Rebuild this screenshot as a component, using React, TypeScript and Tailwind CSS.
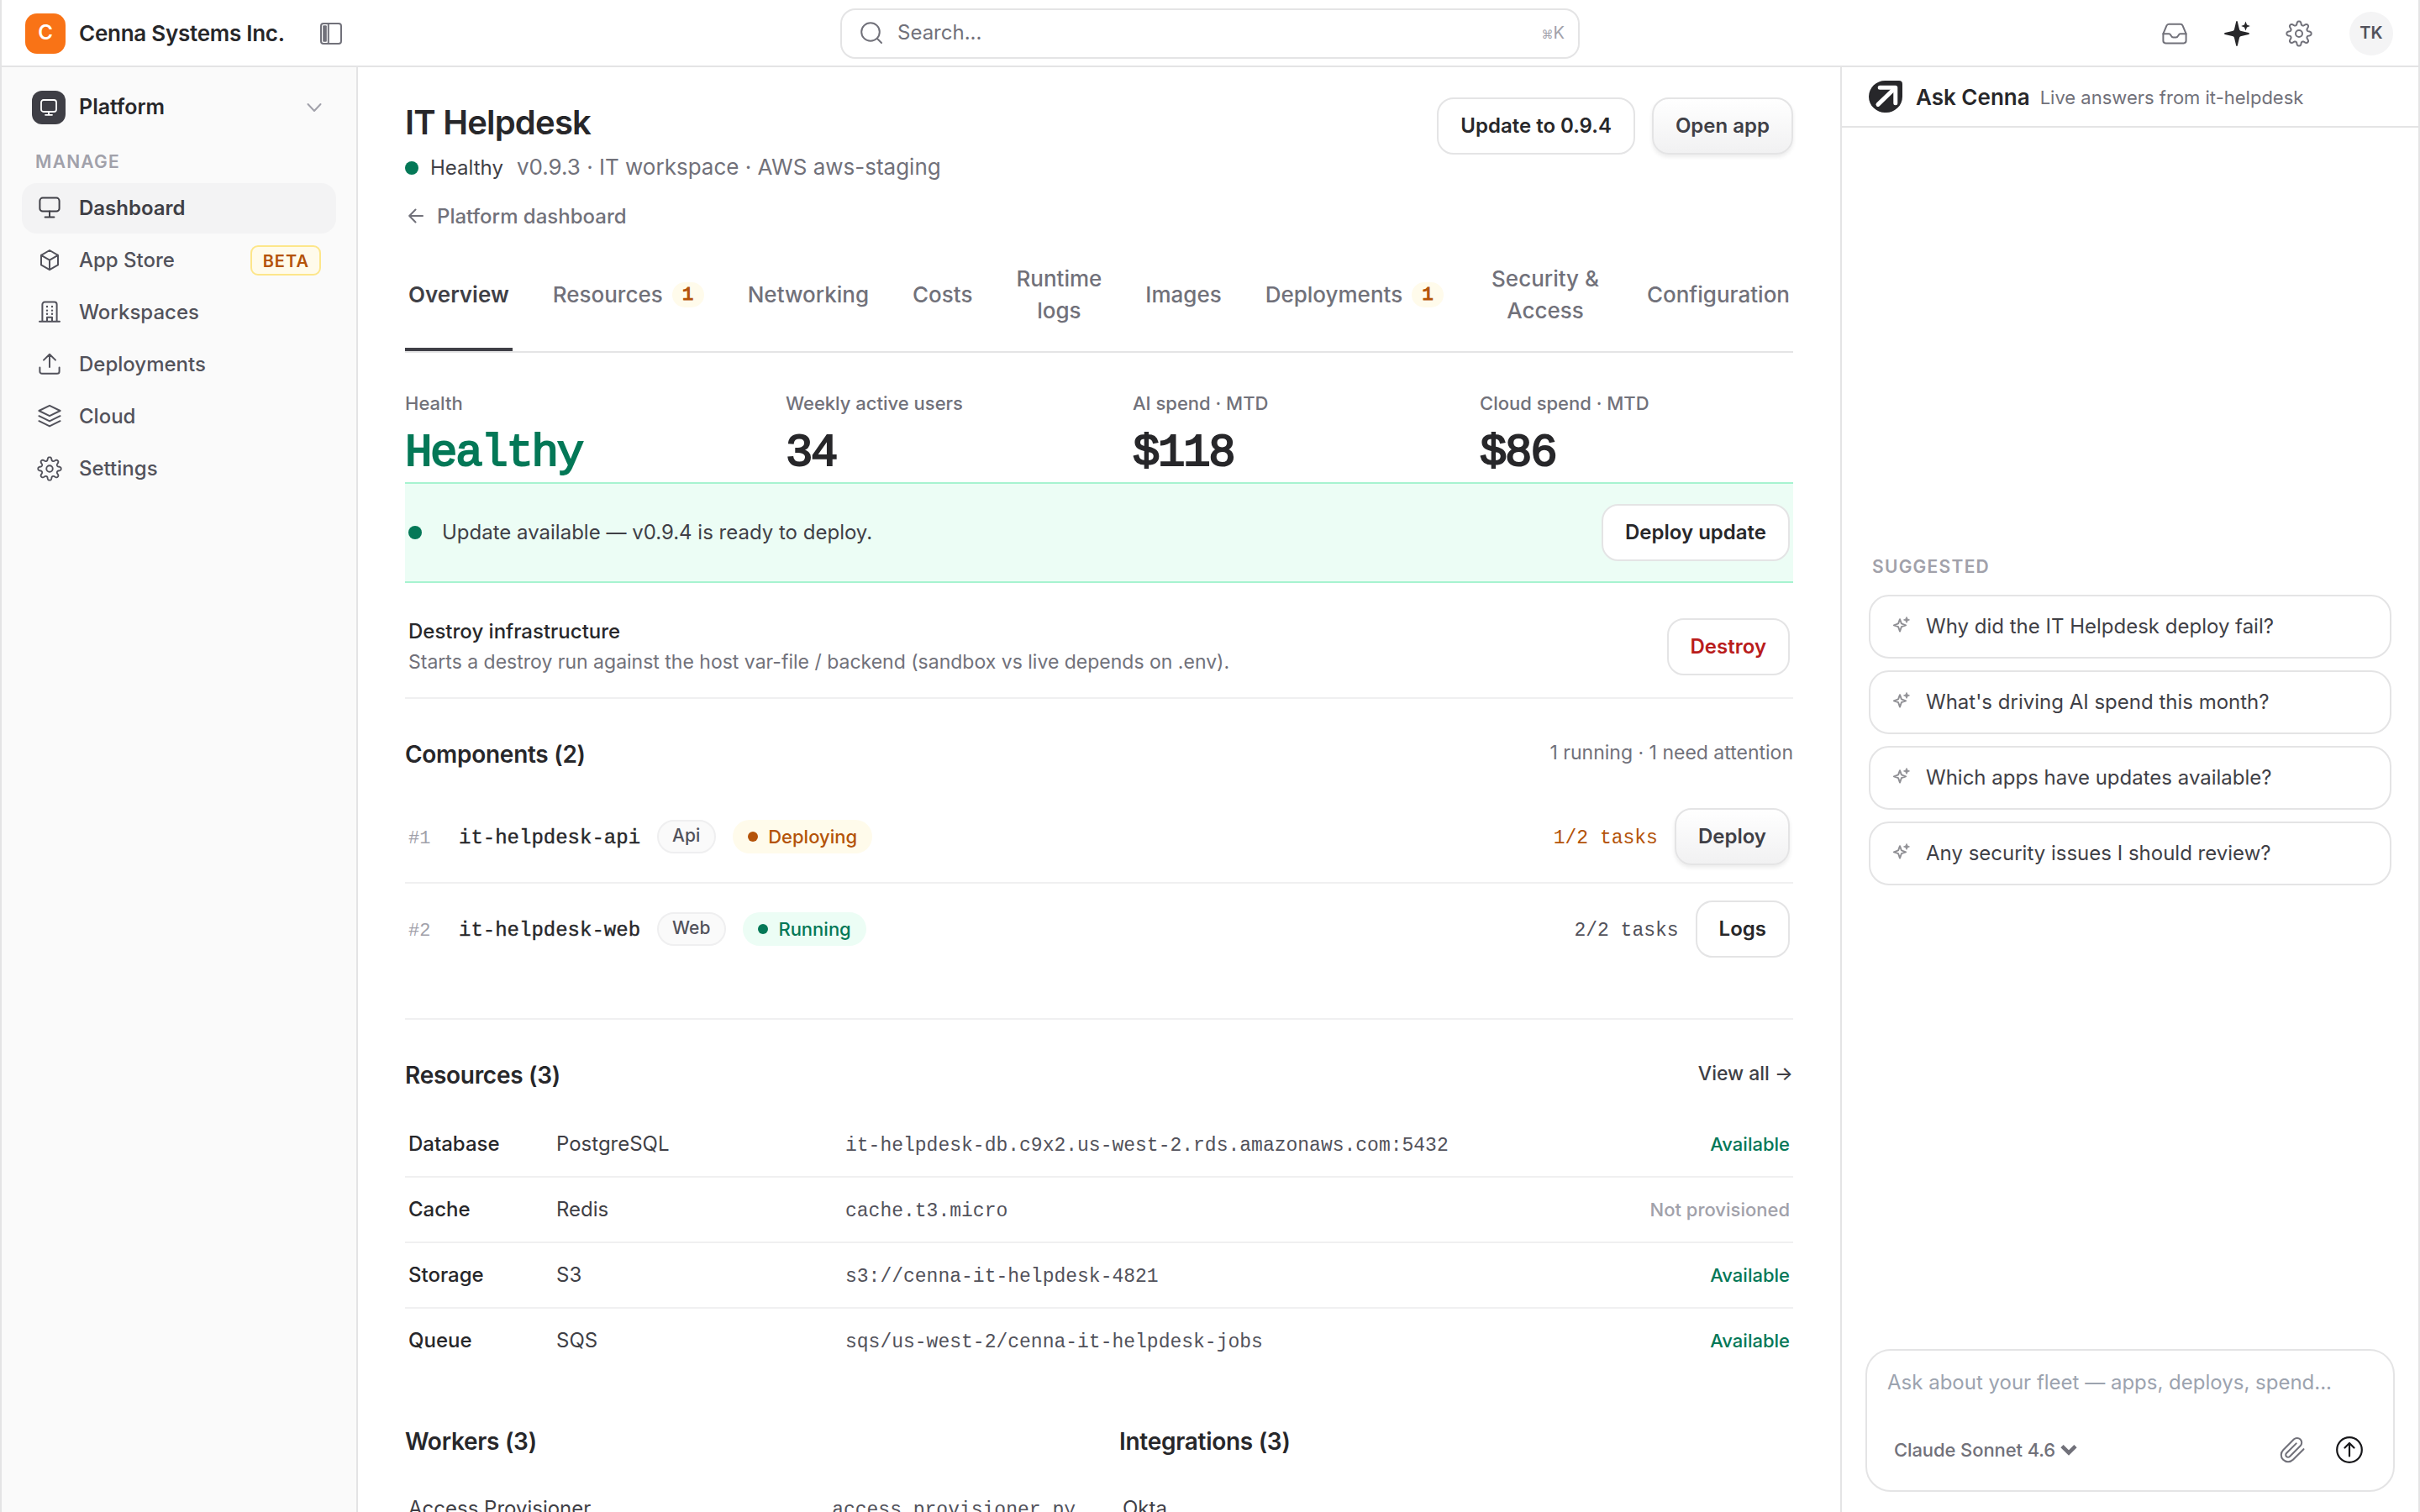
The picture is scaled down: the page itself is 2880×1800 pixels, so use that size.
import type { ReactNode } from "react";

/* ---------- icons ---------- */

function gearPath(c: number, mid: number, amp: number) {
  const pts: string[] = [];
  for (let i = 0; i < 192; i++) {
    const a = (i / 192) * Math.PI * 2;
    const r = mid + (amp * Math.tanh(1.5 * Math.cos(8 * a))) / Math.tanh(1.5);
    pts.push(`${(c + r * Math.sin(a)).toFixed(2)} ${(c - r * Math.cos(a)).toFixed(2)}`);
  }
  return `M${pts.join("L")}Z`;
}
const GEAR = gearPath(16, 12.5, 2.1);

function Gear({ className }: { className: string }) {
  return (
    <svg viewBox="0 0 32 32" fill="none" stroke="currentColor" strokeWidth="2" strokeLinejoin="round" className={className}>
      <path d={GEAR} />
      <circle cx="16" cy="16" r="4" />
    </svg>
  );
}

function NavSvg({ children }: { children: ReactNode }) {
  return (
    <svg
      viewBox="0 0 30 30"
      fill="none"
      stroke="currentColor"
      strokeWidth="2"
      strokeLinecap="round"
      strokeLinejoin="round"
      className="h-[30px] w-[30px] shrink-0"
    >
      {children}
    </svg>
  );
}

const MonitorIcon = () => (
  <NavSvg>
    <rect x="3.4" y="2.6" width="23.2" height="16" rx="3.4" />
    <path d="M15 18.6v7M9.6 25.6h10.8" />
  </NavSvg>
);
const CubeIcon = () => (
  <NavSvg>
    <path d="M15 3 25 8.8v11.6L15 26.2 5 20.4V8.8zM5 8.8l10 5.8 10-5.8M15 14.6v11.6" />
  </NavSvg>
);
const BuildingIcon = () => (
  <NavSvg>
    <path d="M3 25.8h24M6.4 25.8V5.4a2.8 2.8 0 0 1 2.8-2.8h11.6a2.8 2.8 0 0 1 2.8 2.8v20.4M12 25.8v-5h6v5" />
    <path d="M12 8h.01M18 8h.01M12 12.6h.01M18 12.6h.01M12 16.8h.01M18 16.8h.01" strokeWidth="2.4" />
  </NavSvg>
);
const UploadIcon = () => (
  <NavSvg>
    <path d="M15 18V3M8 9.6 15 2.8l7 6.8M3.4 18.6v4.6a2.6 2.6 0 0 0 2.6 2.6h18a2.6 2.6 0 0 0 2.6-2.6v-4.6" />
  </NavSvg>
);
const LayersIcon = () => (
  <NavSvg>
    <path d="M15 1.8 27.6 8 15 14.2 2.4 8zM2.4 14.2 15 20.4l12.6-6.2M2.4 20.2 15 26.4l12.6-6.2" />
  </NavSvg>
);

function SparkleOutline() {
  return (
    <svg viewBox="0 0 24 24" fill="none" className="mb-1 h-6 w-6 shrink-0 text-[#8f8f94]">
      <path
        d="M11 5.2l1.9 5.2 5.2 1.9-5.2 1.9-1.9 5.4-1.9-5.4-5.2-1.9 5.2-1.9z"
        stroke="currentColor"
        strokeWidth="1.9"
        strokeLinejoin="round"
      />
      <path
        d="M19 2.4l1.1 2.5 2.4 1-2.4 1L19 9.4l-1.1-2.5-2.4-1 2.4-1z"
        fill="currentColor"
        stroke="currentColor"
        strokeWidth=".8"
        strokeLinejoin="round"
      />
    </svg>
  );
}

function AskLogo() {
  return (
    <svg viewBox="0 0 40 38" className="h-[38px] w-10 shrink-0">
      <path d="M19.5 0H36a4 4 0 0 1 4 4v15a19.5 19 0 0 1-20 19A19.5 19 0 0 1 0 19 19.5 19 0 0 1 19.5 0z" fill="#27272a" />
      <path d="M13.2 8.2h18.600v18.600" fill="none" stroke="#fff" strokeWidth="5" strokeLinecap="round" strokeLinejoin="round" />
      <path d="M30 10 11 28.4" fill="none" stroke="#fff" strokeWidth="5" strokeLinecap="round" />
    </svg>
  );
}

/* ---------- shared pieces ---------- */

function Button({ children, tone = "plain" }: { children: ReactNode; tone?: "plain" | "raised" | "danger" }) {
  const tones = {
    plain: "bg-white text-[#27272a]",
    raised: "bg-linear-to-b from-white to-[#f1f1f2] text-[#3f3f46] shadow-[0_3px_5px_rgba(0,0,0,0.08)]",
    danger: "bg-white text-[#b91c1c]",
  };
  return (
    <button
      className={`flex h-[68px] shrink-0 items-center rounded-[20px] border-2 border-[#e4e4e5] px-[26px] text-[24px] font-semibold whitespace-nowrap ${tones[tone]}`}
    >
      {children}
    </button>
  );
}

const mono = "font-['Liberation_Mono',monospace]";

/* ---------- header ---------- */

function TopBar() {
  return (
    <header className="flex h-20 shrink-0 items-center border-b-2 border-[#e4e4e5] pt-[2px] pr-[30px] pl-7">
      <div className="flex w-[970px] shrink-0 items-center">
        <div className="flex h-12 w-12 items-center justify-center rounded-[14px] bg-[#f97316] pb-[2px] text-[24px] font-semibold text-white">C</div>
        <span className="ml-4 pb-[2px] text-[26px] font-semibold tracking-[-0.01em]">Cenna Systems Inc.</span>
        <svg viewBox="0 0 26 26" fill="none" stroke="currentColor" className="ml-[42px] h-[26px] w-[26px] text-[#71717a]">
          <rect x="1" y="1" width="24" height="24" rx="3" strokeWidth="2" />
          <path d="M9.800 1.500v23" strokeWidth="2" />
          <rect x="3.200" y="3.200" width="4.600" height="19.600" rx="1" fill="currentColor" stroke="none" />
        </svg>
      </div>
      <div className="flex h-[60px] w-[880px] shrink-0 items-center rounded-[18px] border-2 border-[#e4e4e5] pr-4 pl-[22px] text-[#71717a]">
        <svg viewBox="0 0 26 26" fill="none" stroke="currentColor" strokeWidth="2" strokeLinecap="round" className="mb-[2px] h-[26px] w-[26px]">
          <circle cx="12" cy="12" r="10.8" />
          <path d="m20 20 5 5" />
        </svg>
        <span className="ml-[18px] pb-[2px] text-[24px]">Search...</span>
        <span className="ml-auto pb-[3px] text-[20px] text-[#a1a1aa]">
          <span className="font-['DejaVu_Sans',sans-serif] text-[14px]">⌘</span>K
        </span>
      </div>
      <div className="flex flex-1 items-center justify-end text-[#71717a]">
        <svg viewBox="0 0 30 30" fill="none" stroke="currentColor" strokeWidth="2" strokeLinejoin="round" strokeLinecap="round" className="h-[30px] w-[30px]">
          <path d="M1.4 15.2 5.4 5.6a3 3 0 0 1 2.7-1.8h13.8a3 3 0 0 1 2.7 1.8l4 9.6v8.4a2.8 2.8 0 0 1-2.8 2.8H4.2a2.8 2.8 0 0 1-2.8-2.8z" />
          <path d="M1.4 15.2h6.8c1.4 0 1.8.9 2.3 1.9.6 1.3 1.4 2.3 2.9 2.3h3.2c1.5 0 2.3-1 2.9-2.3.5-1 .9-1.9 2.3-1.9h6.8" />
        </svg>
        <svg viewBox="0 0 32 32" className="ml-[43px] h-8 w-8 text-[#27272a]" fill="currentColor">
          <path d="M16 1c.5 0 .8.4.9.9l2 8.6c.3 1.4 1.1 2.2 2.5 2.5l8.700 2c1.200.3 1.200 1.700 0 2l-8.700 2c-1.400.3-2.200 1.100-2.500 2.500l-2 8.600c-.2 1.200-1.600 1.200-1.800 0l-2-8.600c-.3-1.400-1.100-2.200-2.500-2.500l-8.700-2c-1.200-.3-1.200-1.700 0-2l8.700-2c1.400-.3 2.200-1.100 2.500-2.500l2-8.600c.1-.5.4-.9.9-.9z" />
          <path d="M26.5 1.6l1.500 4 3.800 1.500-3.800 1.500-1.500 4-1.500-4-3.800-1.500 3.800-1.500z" />
        </svg>
        <Gear className="ml-[42px] h-8 w-8" />
        <div className="ml-[44px] flex h-[52px] w-[52px] items-center justify-center rounded-full bg-[#f4f4f5] pb-[2px] text-[20px] font-semibold text-[#52525b]">
          TK
        </div>
      </div>
    </header>
  );
}

/* ---------- sidebar ---------- */

const NAV: { label: string; icon: ReactNode; badge?: string; active?: boolean }[] = [
  { label: "Dashboard", icon: <MonitorIcon />, active: true },
  { label: "App Store", icon: <CubeIcon />, badge: "BETA" },
  { label: "Workspaces", icon: <BuildingIcon /> },
  { label: "Deployments", icon: <UploadIcon /> },
  { label: "Cloud", icon: <LayersIcon /> },
  { label: "Settings", icon: <Gear className="h-[30px] w-[30px] shrink-0" /> },
];

function Sidebar() {
  return (
    <aside className="flex w-[424px] shrink-0 flex-col border-r-2 border-[#e4e4e5] bg-[#fafafa] px-6">
      <div className="mt-7 flex h-10 items-center pr-[17px] pl-3">
        <div className="flex h-10 w-10 items-center justify-center rounded-[12px] bg-[#3f3f46] text-white">
          <svg viewBox="0 0 20 20" fill="none" stroke="currentColor" strokeWidth="1.8" strokeLinecap="round" className="h-5 w-5">
            <rect x="1" y="1" width="18" height="14" rx="2.8" />
            <path d="M10 15v3.6M6 18.800h8" />
          </svg>
        </div>
        <span className="ml-4 text-[25px] font-semibold">Platform</span>
        <svg viewBox="0 0 18 12" fill="none" stroke="currentColor" strokeWidth="2" strokeLinecap="round" strokeLinejoin="round" className="ml-auto h-3 w-[18px] text-[#a1a1aa]">
          <path d="m1.5 2 7.5 8 7.5-8" />
        </svg>
      </div>
      <div className="mt-[30px] h-[30px] pl-4 text-[21px] leading-[30px] font-semibold tracking-[0.06em] text-[#a1a1aa]">MANAGE</div>
      <nav className="mt-[10px] flex flex-col gap-0.5">
        {NAV.map((n) => (
          <a
            key={n.label}
            className={`flex h-[60px] items-center rounded-[18px] px-[18px] text-[24px] ${
              n.active ? "bg-[#f3f3f4] font-semibold text-[#3f3f46]" : "font-medium text-[#52525b]"
            }`}
          >
            {n.icon}
            <span className="ml-5">{n.label}</span>
            {n.badge && (
              <span className="ml-auto flex h-9 items-center rounded-[9px] border-2 border-[#fde68a] bg-[#fffbeb] pt-px pr-3 pl-[13px] text-[20px] font-semibold tracking-[0.05em] text-[#b45309]">
                {n.badge}
              </span>
            )}
          </a>
        ))}
      </nav>
    </aside>
  );
}

/* ---------- main ---------- */

const TABS: { lines: string[]; count?: number; active?: boolean; wide?: boolean }[] = [
  { lines: ["Overview"], active: true },
  { lines: ["Resources"], count: 1 },
  { lines: ["Networking"] },
  { lines: ["Costs"] },
  { lines: ["Runtime", "logs"] },
  { lines: ["Images"] },
  { lines: ["Deployments"], count: 1 },
  { lines: ["Security &", "Access"], wide: true },
  { lines: ["Configuration"] },
];

const STATS = [
  { label: "Health", value: "Healthy", color: "text-[#047857]" },
  { label: "Weekly active users", value: "34", color: "text-[#27272a]" },
  { label: "AI spend · MTD", value: "$118", color: "text-[#27272a]" },
  { label: "Cloud spend · MTD", value: "$86", color: "text-[#27272a]" },
];

const RESOURCES = [
  ["Database", "PostgreSQL", "it-helpdesk-db.c9x2.us-west-2.rds.amazonaws.com:5432", true],
  ["Cache", "Redis", "cache.t3.micro", false],
  ["Storage", "S3", "s3://cenna-it-helpdesk-4821", true],
  ["Queue", "SQS", "sqs/us-west-2/cenna-it-helpdesk-jobs", true],
] as const;

function SectionTitle({ children }: { children: ReactNode }) {
  return <h2 className="text-[28px] leading-10 font-semibold tracking-[-0.01em]">{children}</h2>;
}

function ComponentRow(p: { n: string; name: string; kind: string; status: ReactNode; tasks: string; warn?: boolean; action: ReactNode; divider?: boolean }) {
  return (
    <div className={`flex items-center px-1 py-5 ${p.divider ? "border-b-2 border-[#f0f0f1]" : ""}`}>
      <span className={`w-[60px] pt-[5px] text-[22px] text-[#a1a1aa] ${mono}`}>{p.n}</span>
      <span className={`pt-[4px] text-[24px] text-[#27272a] [-webkit-text-stroke:0.4px_currentColor] ${mono}`}>{p.name}</span>
      <span className="ml-5 flex h-10 items-center rounded-full border-2 border-[#efeff0] bg-[#fafafa] pr-[17px] pb-[2px] pl-4 text-[21px] font-medium text-[#52525b]">
        {p.kind}
      </span>
      {p.status}
      <span className={`mr-5 ml-auto pt-[5px] text-[23px] ${p.warn ? "text-[#b45309]" : "text-[#52525b]"} ${mono}`}>{p.tasks}</span>
      {p.action}
    </div>
  );
}

function Main() {
  return (
    <main className="flex min-w-0 flex-1 flex-col overflow-hidden px-14">
      <div className="mt-9 flex shrink-0 items-start justify-between">
        <div className="pt-1">
          <h1 className="h-[52px] text-[40px] leading-[52px] font-semibold tracking-[-0.02em]">IT Helpdesk</h1>
          <div className="mt-[13px] flex h-[30px] items-center">
            <span className="h-4 w-4 rounded-full bg-[#047857]" />
            <span className="ml-[14px] text-[24px] text-[#3f3f46]">Healthy</span>
            <span className="ml-4 pb-[3px] text-[26px] text-[#71717a]">v0.9.3 · IT workspace · AWS aws-staging</span>
          </div>
          <a className="mt-7 flex h-[30px] items-center pl-1 text-[24px] font-medium text-[#71717a]">
            <svg viewBox="0 0 18 18" fill="none" stroke="currentColor" strokeWidth="2" strokeLinecap="round" strokeLinejoin="round" className="mb-[2px] h-[18px] w-[18px]">
              <path d="M17 9H1.5M8.5 1.5 1.2 9l7.300 7.500" />
            </svg>
            <span className="ml-4">Platform dashboard</span>
          </a>
        </div>
        <div className="flex gap-5">
          <Button>Update to 0.9.4</Button>
          <Button tone="raised">Open app</Button>
        </div>
      </div>

      <div className="mt-[10px] flex h-[137px] shrink-0 gap-11 border-b-2 border-[#e4e4e5] text-[26px] leading-[38px]">
        {TABS.map((t) => (
          <div
            key={t.lines[0]}
            className={`relative flex items-center justify-center px-1 text-center ${t.wide ? "grow" : ""} ${
              t.active ? "font-semibold text-[#3f3f46]" : "font-medium text-[#71717a]"
            }`}
          >
            <span>
              {t.lines.map((l) => (
                <span key={l} className="block">
                  {l}
                </span>
              ))}
            </span>
            {t.count && (
              <span
                className={`ml-[11px] flex h-[30px] w-[38px] items-center justify-center rounded-full bg-[#fffbeb] pt-[2px] text-[22px] font-normal text-[#b45309] [-webkit-text-stroke:1.2px_currentColor] ${mono}`}
              >
                {t.count}
              </span>
            )}
            {t.active && <span className="absolute inset-x-0 bottom-0 h-1 bg-[#3f3f46]" />}
          </div>
        ))}
      </div>

      <div className="mt-[45px] grid shrink-0 grid-cols-[453px_413px_413px_1fr]">
        {STATS.map((s) => (
          <div key={s.label} className="h-[109px]">
            <div className="text-[22px] leading-[30px] font-medium text-[#71717a]">{s.label}</div>
            <div className={`mt-[17px] text-[54px] leading-[56px] tracking-[-2.3px] [-webkit-text-stroke:2px_currentColor] ${s.color} ${mono}`}>{s.value}</div>
          </div>
        ))}
      </div>

      <div className="flex h-[120px] shrink-0 items-center border-y-2 border-[#a7f3d0] bg-[#ecfdf5] px-1">
        <span className="h-4 w-4 rounded-full bg-[#047857]" />
        <span className="ml-6 text-[24px] text-[#3f3f46]">Update available — v0.9.4 is ready to deploy.</span>
        <div className="ml-auto">
          <Button>Deploy update</Button>
        </div>
      </div>

      <div className="flex shrink-0 items-center justify-between border-b-2 border-[#f0f0f1] px-1 pt-10 pb-6 leading-9">
        <div>
          <div className="text-[24px] font-medium">Destroy infrastructure</div>
          <div className="text-[23px] text-[#71717a]">Starts a destroy run against the host var-file / backend (sandbox vs live depends on .env).</div>
        </div>
        <Button tone="danger">Destroy</Button>
      </div>

      <section className="shrink-0 border-b-2 border-[#f0f0f1] pb-[52px]">
        <div className="mt-[46px] mb-6 flex h-10 items-center justify-between">
          <SectionTitle>Components (2)</SectionTitle>
          <span className="pb-[3px] text-[23px] text-[#71717a]">1 running · 1 need attention</span>
        </div>
        <ComponentRow
          n="#1"
          name="it-helpdesk-api"
          kind="Api"
          divider
          warn
          tasks="1/2 tasks"
          status={
            <span className="ml-5 flex h-10 items-center gap-3 rounded-full bg-[#fffbeb] px-[18px] text-[22px] font-medium text-[#b45309]">
              <span className="h-3 w-3 rounded-full bg-[#b45309]" />
              Deploying
            </span>
          }
          action={<Button tone="raised">Deploy</Button>}
        />
        <ComponentRow
          n="#2"
          name="it-helpdesk-web"
          kind="Web"
          tasks="2/2 tasks"
          status={
            <span className="ml-5 flex h-10 items-center gap-3 rounded-full bg-[#ecfdf5] px-[18px] text-[22px] font-medium text-[#047857]">
              <span className="h-3 w-3 rounded-full bg-[#047857]" />
              Running
            </span>
          }
          action={<Button>Logs</Button>}
        />
      </section>

      <section className="shrink-0">
        <div className="mt-[46px] mb-6 flex h-10 items-center justify-between">
          <SectionTitle>Resources (3)</SectionTitle>
          <a className="pb-1 text-[23px] font-medium text-[#3f3f46]">View all →</a>
        </div>
        {RESOURCES.map(([kind, engine, id, ok]) => (
          <div
            key={kind}
            className="grid h-[78px] grid-cols-[176px_344px_1fr_auto] items-center border-b-2 border-[#f0f0f1] px-1 text-[24px] last:h-[76px] last:border-b-0"
          >
            <span className="font-medium">{kind}</span>
            <span className="text-[#3f3f46]">{engine}</span>
            <span className={`pt-[5px] text-[23px] text-[#52525b] ${mono}`}>{id}</span>
            <span className={`text-[22px] font-medium ${ok ? "text-[#047857]" : "text-[#a1a1aa]"}`}>{ok ? "Available" : "Not provisioned"}</span>
          </div>
        ))}
      </section>

      <div className="mt-[62px] grid shrink-0 grid-cols-2 gap-12">
        <section>
          <SectionTitle>Workers (3)</SectionTitle>
          <div className="mt-6 flex h-[72px] items-center justify-between px-1 text-[24px] text-[#3f3f46]">
            <span>Access Provisioner</span>
            <span className={`pt-[5px] text-[23px] text-[#52525b] ${mono}`}>access_provisioner.py</span>
          </div>
        </section>
        <section>
          <SectionTitle>Integrations (3)</SectionTitle>
          <div className="mt-6 flex h-[72px] items-center px-1 text-[24px] text-[#3f3f46]">Okta</div>
        </section>
      </div>
    </main>
  );
}

/* ---------- assistant panel ---------- */

const SUGGESTIONS = [
  "Why did the IT Helpdesk deploy fail?",
  "What's driving AI spend this month?",
  "Which apps have updates available?",
  "Any security issues I should review?",
];

function AskPanel() {
  return (
    <aside className="flex w-[688px] shrink-0 flex-col border-l-2 border-[#e4e4e5]">
      <div className="flex h-[72px] shrink-0 items-center border-b-2 border-[#e4e4e5] pl-8">
        <AskLogo />
        <span className="ml-4 text-[26px] font-semibold">Ask Cenna</span>
        <span className="ml-3 pt-[3px] text-[22px] text-[#71717a]">Live answers from it-helpdesk</span>
      </div>
      <div className="flex flex-1 flex-col px-8 pt-[508px]">
        <div className="pl-1 text-[21px] leading-[30px] font-semibold tracking-[0.06em] text-[#a1a1aa]">SUGGESTED</div>
        <div className="mt-[18px] flex flex-col gap-[14px]">
          {SUGGESTIONS.map((s) => (
            <div key={s} className="flex h-[76px] items-center rounded-[24px] border-2 border-[#e4e4e5] pl-6 text-[24px] text-[#3f3f46]">
              <SparkleOutline />
              <span className="ml-[18px]">{s}</span>
            </div>
          ))}
        </div>
      </div>
      <div className="mx-7 mb-6 flex h-[170px] shrink-0 flex-col rounded-[30px] border-2 border-[#e4e4e5] pt-[23px] pr-9 pl-6">
        <div className="text-[24px] leading-[30px] text-[#9ca3af]">Ask about your fleet — apps, deploys, spend...</div>
        <div className="mt-[49px] flex h-8 items-center pl-2 text-[#71717a]">
          <span className="text-[22px] font-medium tracking-[-0.1px]">Claude Sonnet 4.6</span>
          <svg viewBox="0 0 20 14" fill="none" stroke="currentColor" strokeWidth="4.6" className="ml-[6px] h-[14px] w-5">
            <path d="m2 2.600 8 8 8-8" />
          </svg>
          <svg viewBox="0 0 24 24" fill="none" stroke="currentColor" strokeWidth="1.5" strokeLinecap="round" strokeLinejoin="round" className="ml-auto h-[33px] w-[33px]">
            <path d="m21.440 11.050-9.190 9.190a6 6 0 0 1-8.490-8.490l9.190-9.190a4 4 0 0 1 5.660 5.660l-9.200 9.190a2 2 0 0 1-2.830-2.830l8.490-8.480" />
          </svg>
          <svg viewBox="0 0 32 32" fill="none" stroke="currentColor" strokeWidth="2.2" strokeLinecap="round" strokeLinejoin="round" className="ml-[35px] h-8 w-8 text-[#18181b]">
            <circle cx="16" cy="16" r="14.800" />
            <path d="M16 23.5V8.500M10.500 13.500 16 8l5.500 5.500" />
          </svg>
        </div>
      </div>
    </aside>
  );
}

export default function App() {
  return (
    <div className="flex h-[1800px] w-full flex-col overflow-hidden border-x-2 border-[#e4e4e5] bg-white font-['Inter',sans-serif] text-[#27272a]">
      <TopBar />
      <div className="flex min-h-0 flex-1">
        <Sidebar />
        <Main />
        <AskPanel />
      </div>
    </div>
  );
}
